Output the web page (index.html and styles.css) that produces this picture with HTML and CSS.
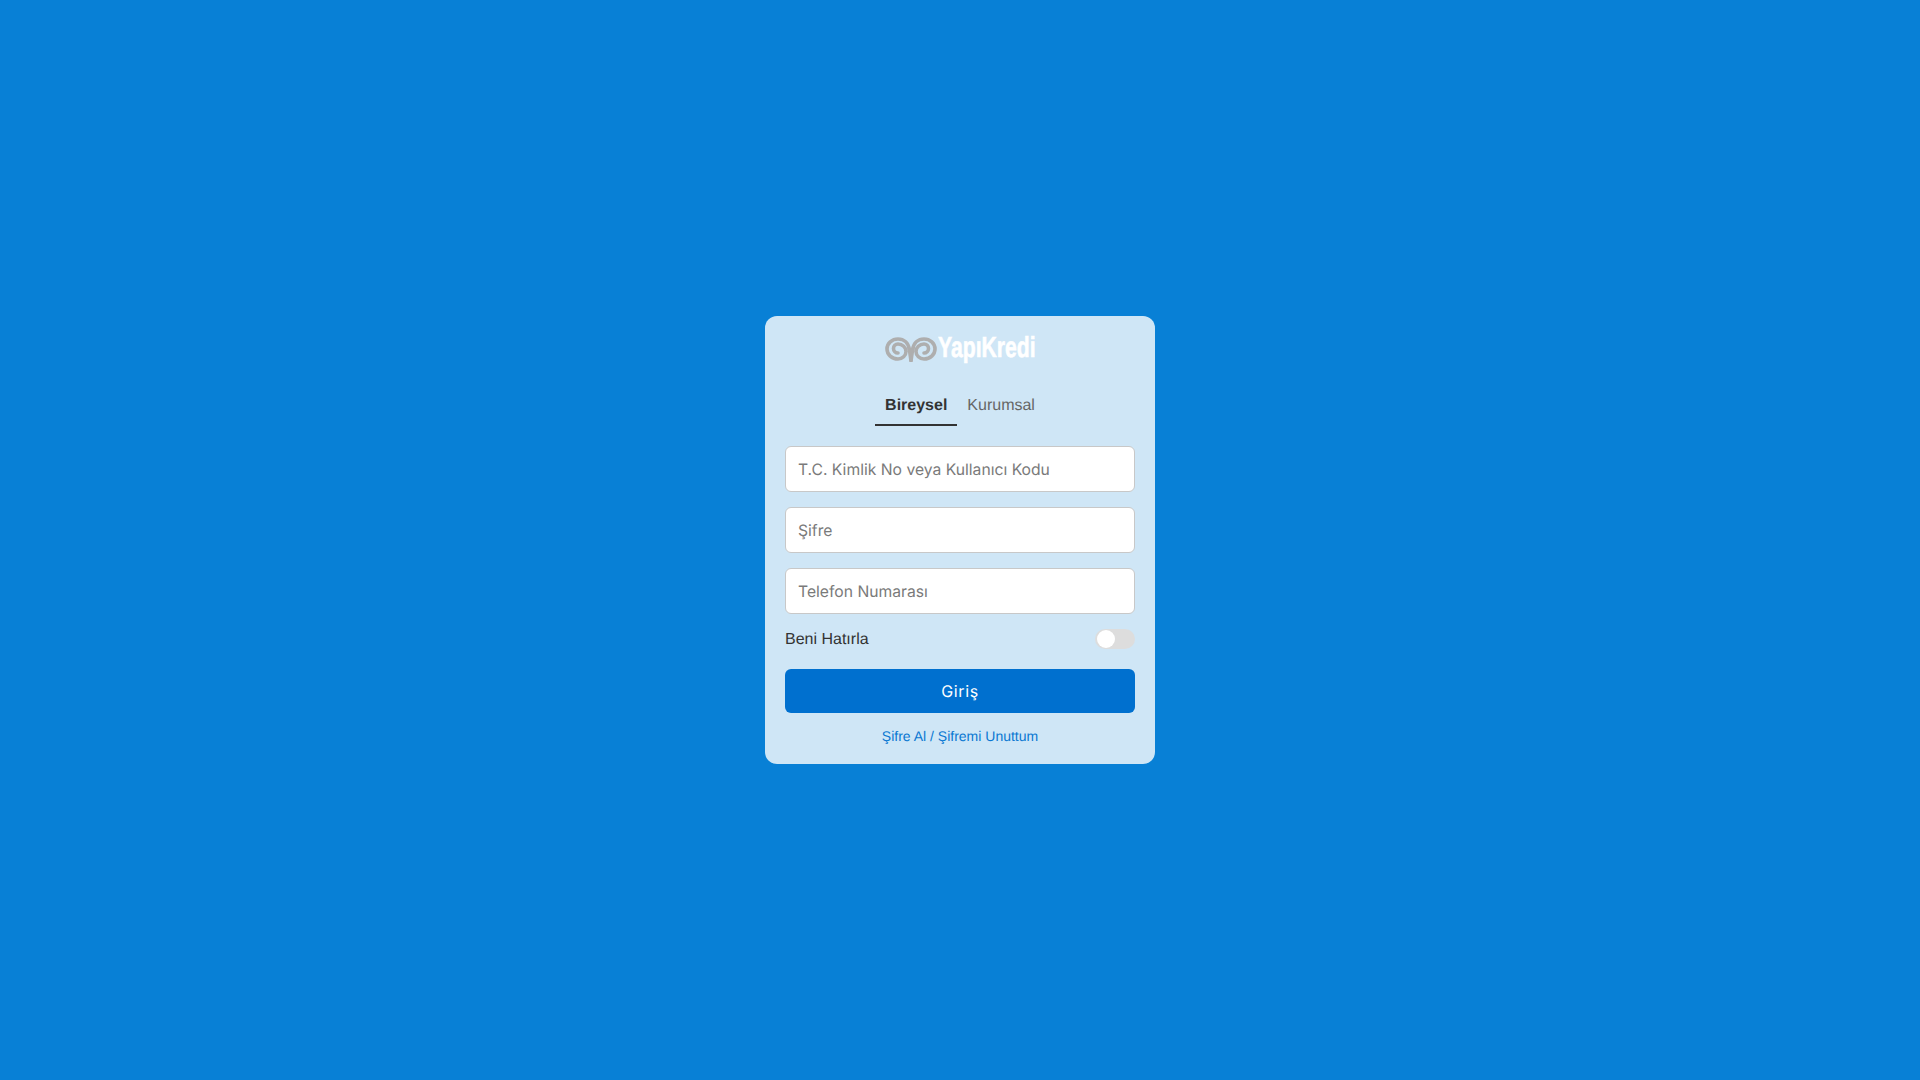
FILE: index.html
```html
<!DOCTYPE html>
<html lang="tr">
<head>
    <meta charset="UTF-8">
    <meta name="viewport" content="width=device-width, initial-scale=1.0">
    <title>Yapı Kredi</title>
    <link rel="stylesheet" href="styles.css">
</head>
<body>

    <section class="card">
        <div class="logo">
            <svg class="logo-mark" width="52" height="26" viewBox="0 0 52 26" fill="none" stroke="#aeaeae" stroke-width="3.6" stroke-linecap="round">
                <path d="M26 24.5C25.500 21 25 18 24.500 14C23.500 7 19 3 13 3A11 10 0 0 0 13 23A8 7.500 0 0 0 13 8A4.500 4.500 0 0 0 13 17"/>
                <path transform="matrix(-1 0 0 1 52 0)" d="M26 24.5C25.500 21 25 18 24.500 14C23.500 7 19 3 13 3A11 10 0 0 0 13 23A8 7.500 0 0 0 13 8A4.500 4.500 0 0 0 13 17"/>
            </svg>
            <span class="logo-text">YapıKredi</span>
        </div>

        <div class="tabs">
            <div class="tab active">Bireysel</div>
            <div class="tab">Kurumsal</div>
        </div>

        <form class="login-form">
            <input class="field" type="text" placeholder="T.C. Kimlik No veya Kullanıcı Kodu">
            <input class="field" type="password" placeholder="Şifre">
            <input class="field" type="text" placeholder="Telefon Numarası">

            <div class="remember">
                <span class="remember-label">Beni Hatırla</span>
                <div class="switch"><div class="knob"></div></div>
            </div>

            <button class="submit" type="button">Giriş</button>
            <a class="forgot" href="#">Şifre Al / Şifremi Unuttum</a>
        </form>
    </section>

</body>
</html>
```

FILE: styles.css
```css
*{
    box-sizing: border-box;
}

body{
    margin: 0;
    height: 100vh;
    background-color: #0880d6;
    display: flex;
    align-items: center;
    justify-content: center;
    font-family: "Liberation Sans", Arial, sans-serif;
    text-rendering: geometricPrecision;
}

.card{
    width: 390px;
    height: 448px;
    padding: 20px;
    background-color: #cfe6f6;
    border-radius: 12px;
    display: flex;
    flex-direction: column;
}

.logo{
    height: 26px;
    display: flex;
    justify-content: center;
    align-items: center;
    gap: 1px;
}

.logo-text{
    display: inline-block;
    width: 98px;
    margin-bottom: 2px;
    color: #fff;
    font-weight: 700;
    font-size: 29px;
    line-height: 26px;
    white-space: nowrap;
    -webkit-text-stroke: 0.6px #fff;
    transform: scaleX(0.73);
    transform-origin: left center;
}

.tabs{
    margin-top: 20px;
    display: flex;
    justify-content: center;
    height: 44px;
}

.tab{
    padding: 2px 10px 0;
    font-size: 16px;
    line-height: 44px;
    color: #666;
}

.tab.active{
    font-weight: 700;
    color: #333;
    border-bottom: 2px solid #333;
}

.login-form{
    margin-top: 20px;
    display: flex;
    flex-direction: column;
}

.field{
    width: 100%;
    height: 46px;
    margin-bottom: 15px;
    padding: 0 12px;
    background-color: #fff;
    border: 1px solid #c8c8c8;
    border-radius: 6px;
    font-family: Inter, sans-serif;
    font-size: 15.7px;
    text-rendering: geometricPrecision;
    color: #333;
}

.field::placeholder{
    color: #7a7a7a;
    opacity: 1;
}

.remember{
    display: flex;
    align-items: center;
    justify-content: space-between;
    height: 20px;
    font-size: 16px;
    color: #333;
}

.remember-label{
    padding-top: 1px;
}

.switch{
    width: 40px;
    height: 20px;
    padding: 1px 2px;
    background-color: #ddd;
    border-radius: 10px;
}

.knob{
    width: 18px;
    height: 18px;
    background-color: #fff;
    border-radius: 50%;
}

.submit{
    height: 44px;
    margin-top: 20px;
    background-color: #0070cf;
    border: none;
    border-radius: 6px;
    font-family: Inter, sans-serif;
    font-size: 16px;
    font-weight: 400;
    letter-spacing: 0.6px;
    text-rendering: geometricPrecision;
    color: #fff;
}

.forgot{
    margin-top: 15px;
    text-align: center;
    font-size: 14px;
    line-height: 16px;
    color: #0a78d2;
    text-decoration: none;
}
```
